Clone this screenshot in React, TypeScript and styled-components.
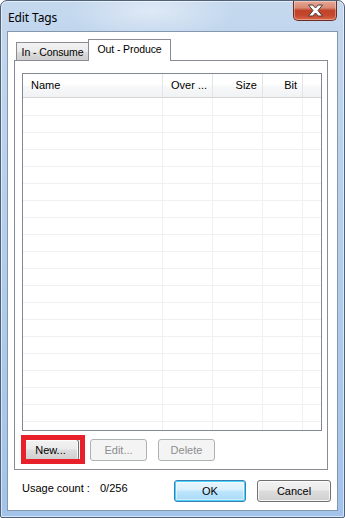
import React from "react";
import styled, { createGlobalStyle } from "styled-components";

const Global = createGlobalStyle`
  html, body { margin: 0; padding: 0; background: #ffffff; }
  * { box-sizing: border-box; }
`;

const Window = styled.div`
  width: 345px;
  height: 518px;
  display: flex;
  flex-direction: column;
  border: 1px solid #4f6278;
  border-radius: 7px 7px 2px 2px;
  background:
    radial-gradient(ellipse 120px 40px at 150px 10px, rgba(255,255,255,0.45), rgba(255,255,255,0) 70%),
    linear-gradient(180deg, #c4d8ee 0%, #b6d0ec 40%, #a2c3ea 100%);
  box-shadow: inset 0 0 0 1px rgba(255,255,255,0.55);
  overflow: hidden;
`;

const TitleBar = styled.div`
  height: 30px;
  flex: none;
  display: flex;
  align-items: flex-start;
  justify-content: space-between;
  padding-left: 7px;
  padding-right: 7px;
`;

const Title = styled.div`
  font-family: "Noto Sans", "Open Sans", sans-serif;
  font-size: 12px;
  color: #000;
  padding-top: 8px;
  letter-spacing: -0.1px;
`;

const CloseButton = styled.div`
  width: 44px;
  height: 20px;
  display: flex;
  align-items: center;
  justify-content: center;
  border: 1px solid #6e2b21;
  border-top: none;
  border-radius: 0 0 5px 5px;
  background: linear-gradient(180deg, #e6a896 0%, #d98a74 35%, #c0442a 50%, #c5462c 75%, #d86a4c 100%);
  box-shadow: inset 0 0 0 1px rgba(255,255,255,0.35);
`;

const Client = styled.div`
  flex: 1;
  margin: 0 6px 6px 6px;
  border: 1px solid #8497ad;
  background: #ffffff;
  display: flex;
  flex-direction: column;
  padding: 7px 0 0 6px;
`;

const TabStrip = styled.div`
  height: 21px;
  display: flex;
  align-items: flex-end;
  padding-left: 2px;
  position: relative;
  z-index: 1;
`;

const Tab = styled.div<{ $active?: boolean }>`
  font-family: "Liberation Sans", Arial, sans-serif;
  font-size: 10.5px;
  letter-spacing: -0.1px;
  color: #000;
  display: flex;
  align-items: center;
  justify-content: center;
  border: 1px solid #898c95;
  border-bottom: none;
  white-space: nowrap;
  width: ${(p) => (p.$active ? "83px" : "73px")};
  height: ${(p) => (p.$active ? "22px" : "18px")};
  margin-bottom: ${(p) => (p.$active ? "-1px" : "0")};
  padding: ${(p) => (p.$active ? "0 0 3px 0" : "1px 0 0 0")};
  margin-left: ${(p) => (p.$active ? "-1px" : "0")};
  background: ${(p) =>
    p.$active
      ? "#ffffff"
      : "linear-gradient(180deg, #f2f2f2 0%, #ebebeb 50%, #dddddd 50%, #cfcfcf 100%)"};
`;

const Panel = styled.div`
  height: 410px;
  margin-right: 9px;
  border: 1px solid #898c95;
  background: #ffffff;
  display: flex;
  flex-direction: column;
  gap: 8px;
  padding: 12px 5px 8px 7px;
`;

const List = styled.div`
  height: 358px;
  border: 1px solid #828790;
  display: flex;
  flex-direction: column;
  overflow: hidden;
`;

const cols = "140px 50px 50px 40px 1fr";

const HeaderRow = styled.div`
  height: 24px;
  flex: none;
  display: grid;
  grid-template-columns: ${cols};
  border-bottom: 1px solid #d5d5d5;
  background: linear-gradient(180deg, #ffffff 0%, #ffffff 45%, #f7f8f9 55%, #f1f2f4 100%);
`;

const HeaderCell = styled.div<{ $align?: "left" | "right" }>`
  font-family: "Liberation Sans", Arial, sans-serif;
  font-size: 11px;
  color: #000;
  display: flex;
  align-items: center;
  justify-content: ${(p) => (p.$align === "right" ? "flex-end" : "flex-start")};
  padding: 0 5px 1px 8px;
  border-right: 1px solid #e3e5e7;
  white-space: nowrap;
  overflow: hidden;
  &:last-child { border-right: none; }
`;

const Body = styled.div`
  flex: 1;
  padding-top: 1px;
  overflow: hidden;
`;

const Row = styled.div`
  height: 17px;
  display: grid;
  grid-template-columns: ${cols};
  border-bottom: 1px solid #f0f0f0;
`;

const Cell = styled.div`
  border-right: 1px solid #f0f0f0;
  &:last-child { border-right: none; }
`;

const ButtonRow = styled.div`
  display: flex;
  gap: 11px;
`;

const Button = styled.div<{ $disabled?: boolean; $default?: boolean; $w?: number }>`
  position: relative;
  width: ${(p) => p.$w ?? 57}px;
  height: 22px;
  display: flex;
  align-items: center;
  justify-content: center;
  font-family: "Liberation Sans", Arial, sans-serif;
  font-size: 11px;
  border-radius: 3px;
  color: ${(p) => (p.$disabled ? "#8d8d8d" : "#000")};
  border: 1px solid
    ${(p) => (p.$disabled ? "#adb2b5" : p.$default ? "#3c7fb1" : "#707070")};
  background: ${(p) =>
    p.$disabled
      ? "#f4f4f4"
      : p.$default
      ? "linear-gradient(180deg, #eaf6fd 0%, #d9f0fc 45%, #bee6fd 50%, #a7d9f5 100%)"
      : "linear-gradient(180deg, #f2f2f2 0%, #ebebeb 45%, #dddddd 50%, #cfcfcf 100%)"};
  box-shadow: ${(p) =>
    p.$disabled
      ? "none"
      : p.$default
      ? "inset 0 0 0 1px #48d4ff, inset 0 0 0 2px rgba(255,255,255,0.5)"
      : "inset 0 0 0 1px rgba(255,255,255,0.8)"};
`;

const Highlight = styled.div`
  position: absolute;
  left: -2px;
  top: -5px;
  width: 64px;
  height: 29px;
  border: 5px solid #e8202a;
  pointer-events: none;
`;

const Footer = styled.div`
  flex: 1;
  display: flex;
  align-items: flex-start;
  padding: 10px 6px 0 8px;
`;

const UsageLabel = styled.div`
  font-family: "Liberation Sans", Arial, sans-serif;
  font-size: 11px;
  color: #000;
  width: 78px;
  padding-top: 2px;
`;

const UsageValue = styled.div`
  font-family: "Liberation Sans", Arial, sans-serif;
  font-size: 11px;
  color: #000;
  flex: 1;
  padding-top: 2px;
`;

const FooterButtons = styled.div`
  display: flex;
  gap: 11px;
`;

const CloseGlyph = () => (
  <svg width="17" height="13" viewBox="0 0 17 13">
    <path
      d="M1.5 1 L5.8 1 L8.5 4 L11.2 1 L15.5 1 L11 6.5 L15.5 12 L11.2 12 L8.5 9 L5.8 12 L1.5 12 L6 6.5 Z"
      fill="#ffffff"
      stroke="#4a3a3a"
      strokeWidth="1"
      strokeLinejoin="round"
    />
  </svg>
);

export default function App() {
  const rows = Array.from({ length: 20 });
  return (
    <>
      <Global />
      <Window>
        <TitleBar>
          <Title>Edit Tags</Title>
          <CloseButton>
            <CloseGlyph />
          </CloseButton>
        </TitleBar>
        <Client>
          <TabStrip>
            <Tab>In - Consume</Tab>
            <Tab $active>Out - Produce</Tab>
          </TabStrip>
          <Panel>
            <List>
              <HeaderRow>
                <HeaderCell>Name</HeaderCell>
                <HeaderCell>Over ...</HeaderCell>
                <HeaderCell $align="right">Size</HeaderCell>
                <HeaderCell $align="right">Bit</HeaderCell>
                <HeaderCell />
              </HeaderRow>
              <Body>
                {rows.map((_, i) => (
                  <Row key={i}>
                    <Cell />
                    <Cell />
                    <Cell />
                    <Cell />
                    <Cell />
                  </Row>
                ))}
              </Body>
            </List>
            <ButtonRow>
              <Button>
                New...
                <Highlight />
              </Button>
              <Button $disabled>Edit...</Button>
              <Button $disabled>Delete</Button>
            </ButtonRow>
          </Panel>
          <Footer>
            <UsageLabel>Usage count :</UsageLabel>
            <UsageValue>0/256</UsageValue>
            <FooterButtons>
              <Button $default $w={72}>OK</Button>
              <Button $w={74}>Cancel</Button>
            </FooterButtons>
          </Footer>
        </Client>
      </Window>
    </>
  );
}
